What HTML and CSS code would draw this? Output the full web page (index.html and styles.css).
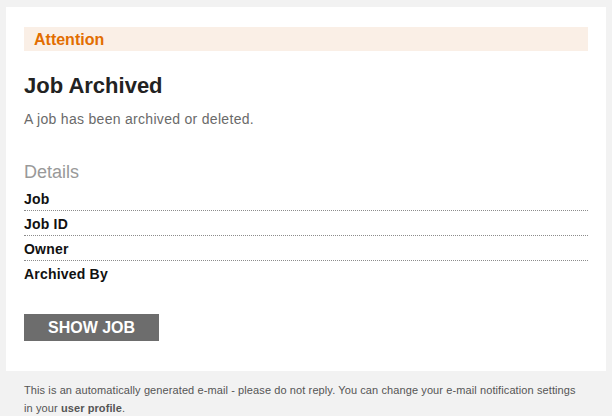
FILE: index.html
```html
<!DOCTYPE html>
<html lang="en">
<head>
  <meta charset="UTF-8">
  <title>Job Archived</title>
  <link rel="stylesheet" href="styles.css">
</head>
<body>

  <div class="wrapper">
    <div class="card">
      <div class="attention">Attention</div>

      <h1>Job Archived</h1>
      <p class="intro">A job has been archived or deleted.</p>

      <h2>Details</h2>
      <div class="details">
        <div class="row">Job</div>
        <div class="row">Job ID</div>
        <div class="row">Owner</div>
        <div class="row">Archived By</div>
      </div>

      <a class="show-btn" href="#">SHOW JOB</a>
    </div>

    <div class="footer">
      This is an automatically generated e-mail - please do not reply. You can change your e-mail notification settings<br>
      in your <a href="#">user profile</a>.
    </div>
  </div>

</body>
</html>
```

FILE: styles.css
```css
body {
  margin: 0;
  background: #f2f2f2;
  font-family: 'Liberation Sans', Arial, sans-serif;
  color: #222;
}

.wrapper {
  padding: 7px 6px 0;
}

.card {
  background: #fff;
  padding: 20px 18px 30px;
}

.attention {
  background: #faefe6;
  color: #e26d00;
  font-size: 16px;
  font-weight: bold;
  line-height: 22px;
  padding: 2px 10px 0;
}

h1 {
  font-size: 22px;
  line-height: 26px;
  margin: 22px 0 0;
  color: #222;
}

.intro {
  font-size: 14px;
  letter-spacing: 0.3px;
  line-height: 18px;
  color: #6a6a6a;
  margin: 11px 0 0;
}

h2 {
  font-size: 18px;
  font-weight: normal;
  line-height: 22px;
  color: #999;
  margin: 33px 0 3px;
}

.row {
  font-size: 14px;
  font-weight: bold;
  letter-spacing: 0.2px;
  line-height: 18px;
  color: #111;
  padding: 4px 0 2px;
  border-bottom: 1px dotted #8c8c8c;
}

.row:last-child {
  border-bottom: none;
}

.show-btn {
  display: inline-block;
  margin-top: 29px;
  padding: 0 24px;
  line-height: 27px;
  background: #6d6d6d;
  color: #fff;
  font-size: 16px;
  font-weight: bold;
  text-decoration: none;
}

.footer {
  padding: 10px 18px 0;
  font-size: 11px;
  letter-spacing: 0.1px;
  line-height: 18px;
  color: #555;
}

.footer a {
  color: #555;
  font-weight: bold;
  text-decoration: none;
}
```
